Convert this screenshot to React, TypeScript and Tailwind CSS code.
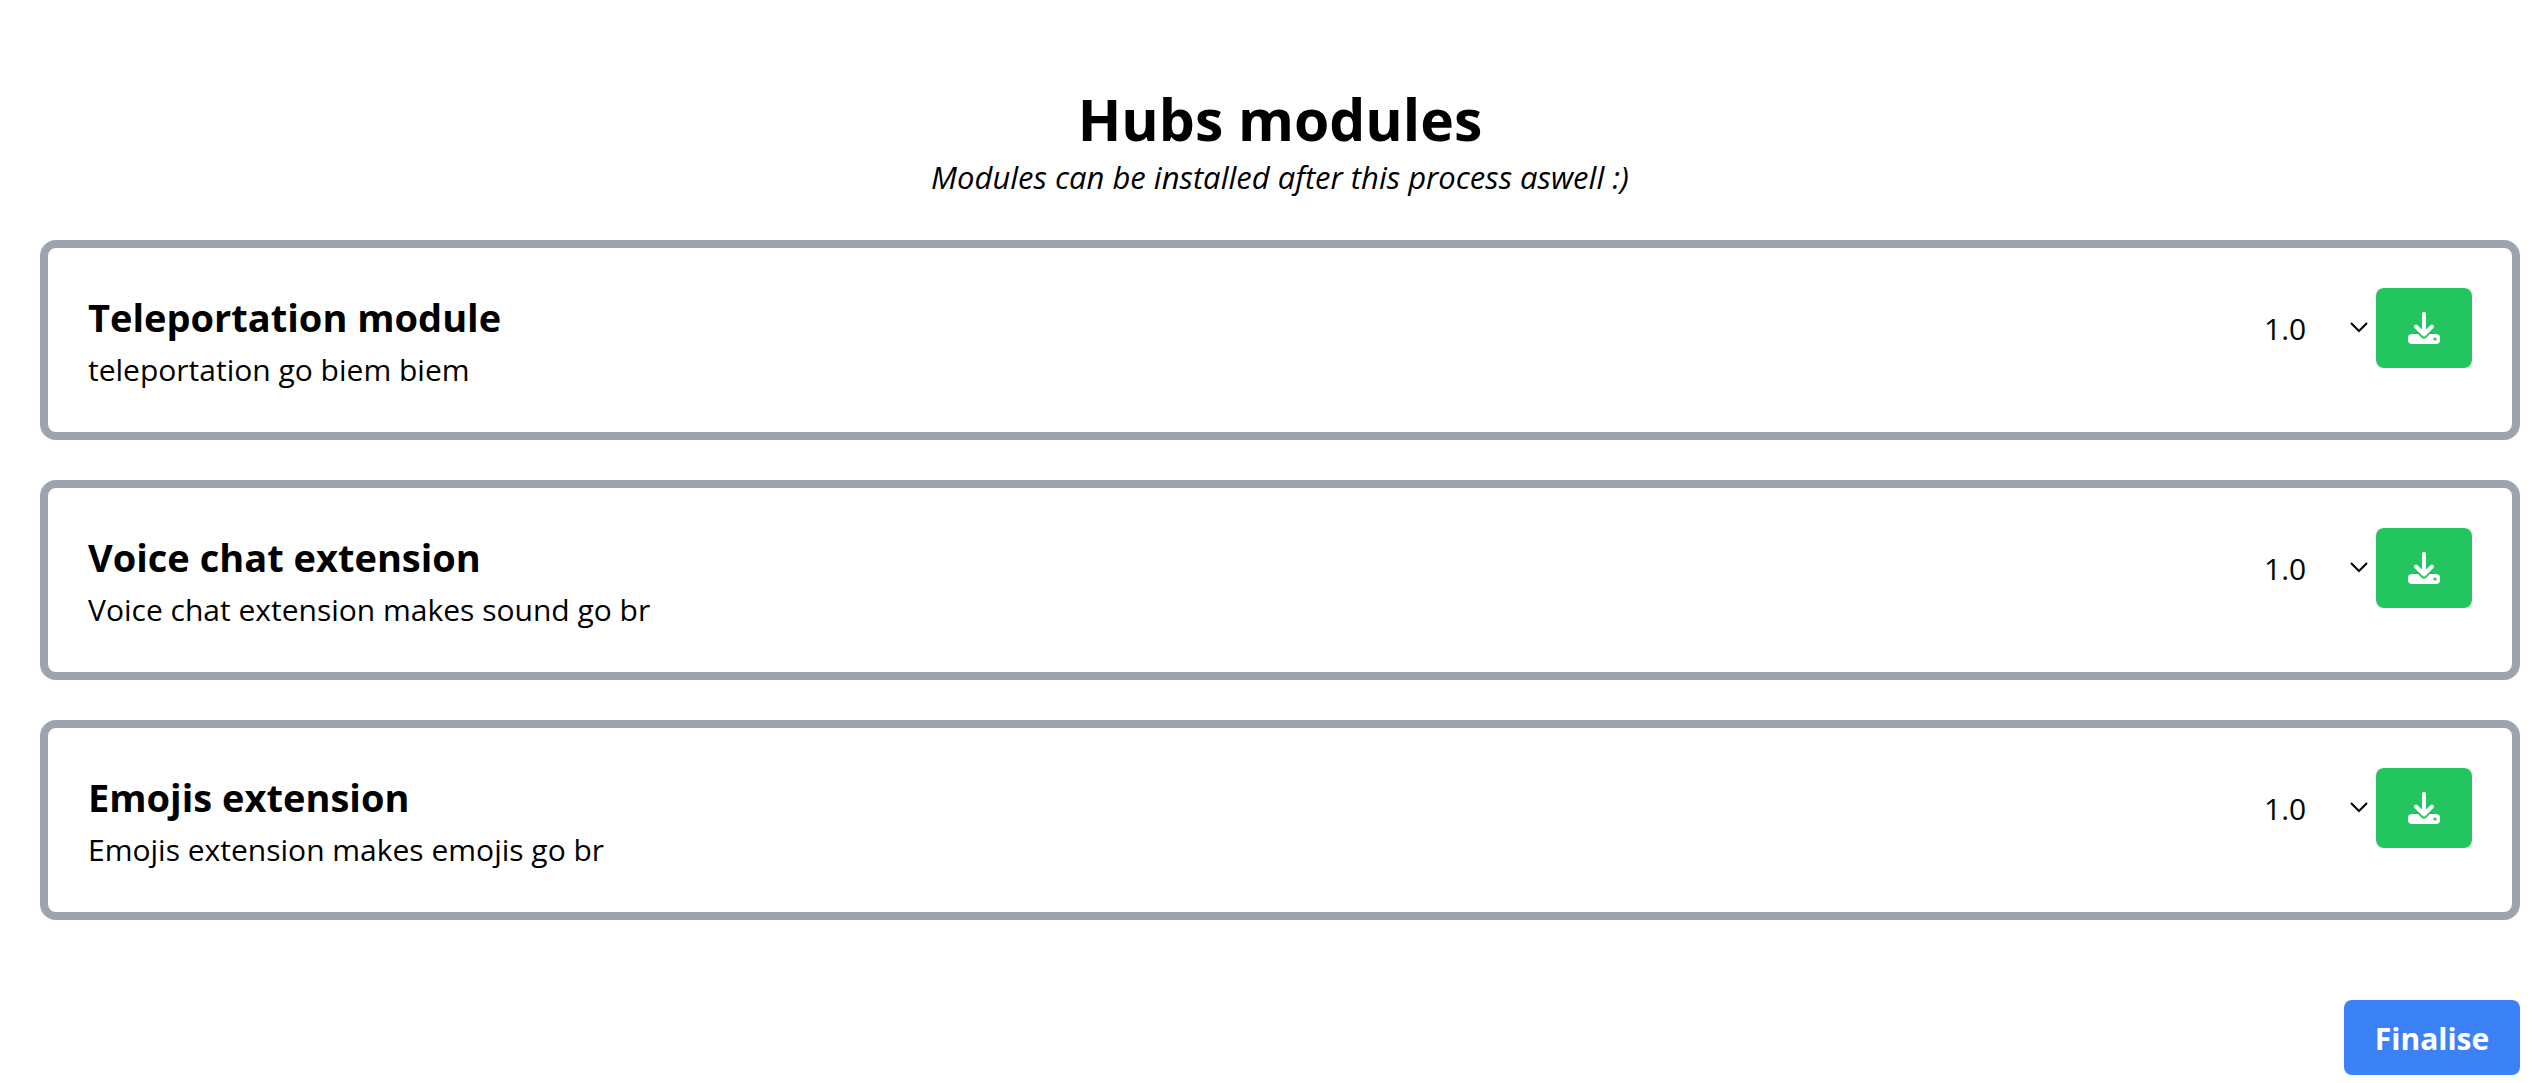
const modules = [
  { id: "teleportation", name: "Teleportation module", description: "teleportation go biem biem" },
  { id: "voice", name: "Voice chat extension", description: "Voice chat extension makes sound go br" },
  { id: "emojis", name: "Emojis extension", description: "Emojis extension makes emojis go br" },
];

function InstallIcon() {
  return (
    <svg viewBox="0 0 32 32" className="size-8" fill="none" aria-hidden="true">
      <rect x="0" y="22" width="32" height="10" rx="4" fill="#fff" />
      <path d="M8 14.5L16 23L24 14.5" stroke="#22c55e" strokeWidth="7" strokeLinecap="round" strokeLinejoin="round" />
      <path d="M16 2V21M8 14.5L16 22.5L24 14.5" stroke="#fff" strokeWidth="4" strokeLinecap="round" strokeLinejoin="round" />
      <circle cx="27" cy="27" r="1.6" fill="#22c55e" />
    </svg>
  );
}

function ModuleCard({ id, name, description }: { id: string; name: string; description: string }) {
  return (
    <li className="flex h-50 items-start justify-between rounded-2xl border-8 border-[#9ca3af] p-10">
      <div>
        <h2 className="text-[38px] leading-[58px] font-bold">{name}</h2>
        <p className="text-[30px] leading-12">{description}</p>
      </div>
      <div className="flex items-center">
        <div className="relative">
          <select
            aria-label={`${name} version`}
            className="block h-20 w-30 appearance-none bg-transparent pt-0.5 pl-2 text-[30px] leading-12"
            id={`${id}-version`}
          >
            <option>1.0</option>
          </select>
          <svg
            viewBox="0 0 20 12"
            className="pointer-events-none absolute top-[33px] right-[7px] h-3 w-5"
            fill="none"
            aria-hidden="true"
          >
            <path d="M2 2L10 10L18 2" stroke="#000" strokeWidth="2" />
          </svg>
        </div>
        <button
          type="button"
          aria-label={`Install ${name}`}
          className="flex h-20 w-24 items-center justify-center rounded-lg bg-[#22c55e]"
        >
          <InstallIcon />
        </button>
      </div>
    </li>
  );
}

export default function App() {
  return (
    <main className="bg-white pt-20 pr-7 pb-2 pl-10 font-['Open_Sans','Noto_Sans',sans-serif] text-black">
      <header className="text-center">
        <h1 className="text-[57px] leading-[78px] font-bold">Hubs modules</h1>
        <p className="text-[31px] leading-[38px] italic">Modules can be installed after this process aswell :)</p>
      </header>
      <ul className="mt-11 flex flex-col gap-10">
        {modules.map((module) => (
          <ModuleCard key={module.id} {...module} />
        ))}
      </ul>
      <div className="mt-20 flex justify-end">
        <button
          type="button"
          className="w-44 rounded-lg bg-[#3b82f6] pt-[17px] pb-[14px] text-center text-[30px] leading-11 font-bold text-white"
        >
          Finalise
        </button>
      </div>
    </main>
  );
}
